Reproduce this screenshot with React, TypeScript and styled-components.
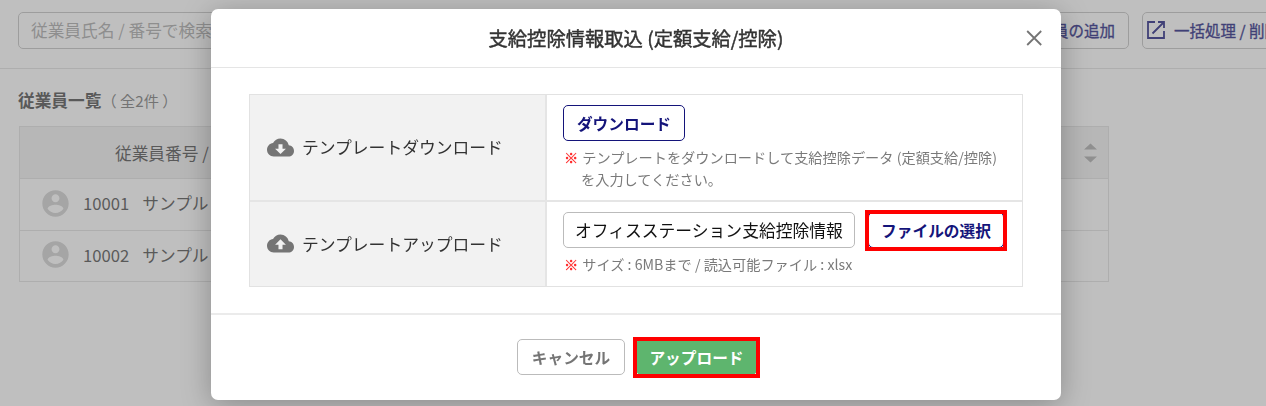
import React from "react";
import styled, { createGlobalStyle } from "styled-components";

const GlobalStyle = createGlobalStyle`
  * { box-sizing: border-box; }
  html, body { margin: 0; height: 100%; overflow: hidden; background: #fff; }
  body, button, input {
    font-family: "Noto Sans CJK JP", "Noto Sans", sans-serif;
    font-size: 16.7px;
    color: #333;
  }
`;

const Page = styled.div`
  width: 1266px;
  height: 406px;
  overflow: hidden;
`;

const Toolbar = styled.div`
  display: flex;
  height: 69px;
  padding: 12px 0 0 18px;
  border-bottom: 1px solid #dcdcdc;
`;

const SearchInput = styled.input`
  flex: none;
  width: 320px;
  height: 37px;
  padding: 0 12px 1px;
  border: 1px solid #bbb;
  border-radius: 5px;
  background: transparent;
  &::placeholder { color: #9c9c9c; opacity: 1; }
`;

const ToolbarActions = styled.div`
  display: flex;
  flex: none;
  gap: 13px;
  margin-left: 616px;
`;

const ToolbarButton = styled.button<{ $width: number; $icon?: boolean }>`
  display: flex;
  flex: none;
  align-items: center;
  justify-content: ${(p) => (p.$icon ? "flex-start" : "flex-end")};
  gap: 9px;
  width: ${(p) => p.$width}px;
  height: 37px;
  padding: ${(p) => (p.$icon ? "0 0 2px 4px" : "0 13px 2px")};
  border: 1px solid #bbb;
  border-radius: 5px;
  background: transparent;
  color: #00006e;
  font-size: 15.5px;
  -webkit-text-stroke: 0.35px currentColor;
  white-space: nowrap;
`;

const ListHeading = styled.div`
  display: flex;
  align-items: center;
  height: 57px;
  padding: 4px 0 0 18px;
`;

const ListTitle = styled.span`
  font-weight: 700;
`;

const ListCount = styled.span`
  font-size: 15.2px;
  color: #666;
  white-space: pre;
`;

const EmployeeTable = styled.div`
  width: 1090px;
  margin-left: 19px;
  border: 1px solid #dcdcdc;
`;

const EmployeeHead = styled.div`
  display: flex;
  align-items: center;
  justify-content: space-between;
  height: 51px;
  padding: 0 11px 0 95px;
  background: #efefef;
`;

const EmployeeRow = styled.div`
  display: flex;
  align-items: center;
  height: 51.5px;
  padding: 0 0 2px 20.5px;
  border-top: 1px solid #dcdcdc;
`;

const EmployeeNumber = styled.span`
  margin: 0 13px 0 13.5px;
`;

const Overlay = styled.div`
  position: fixed;
  inset: 0;
  display: flex;
  justify-content: center;
  align-items: flex-start;
  padding: 9px 0 0 6px;
  background: rgba(128, 128, 128, 0.5);
`;

const Dialog = styled.section`
  width: 850px;
  height: 391px;
  border-radius: 7px;
  background: #fff;
  box-shadow: 0 5px 30px rgba(0, 0, 0, 0.28);
`;

const DialogHeader = styled.header`
  display: grid;
  grid-template-columns: 53px 1fr 53px;
  align-items: center;
  height: 59px;
  border-bottom: 1px solid #e5e5e5;
`;

const DialogTitle = styled.h1`
  grid-column: 2;
  margin: 0;
  font-size: 19.3px;
  font-weight: 400;
  -webkit-text-stroke: 0.45px currentColor;
  text-align: center;
`;

const CloseButton = styled.button`
  display: flex;
  width: 24px;
  height: 24px;
  margin-left: 14px;
  padding: 0;
  border: 0;
  background: none;
`;

const DialogBody = styled.div`
  height: 245px;
  padding: 26px 38px 0;
`;

const FormTable = styled.div`
  width: 774px;
  border: 1px solid #e2e2e2;
`;

const FormRow = styled.div<{ $height: number }>`
  display: grid;
  grid-template-columns: 297px 1fr;
  height: ${(p) => p.$height}px;
  & + & { border-top: 2px solid #e5e5e5; }
`;

const FormLabel = styled.div`
  display: flex;
  align-items: center;
  gap: 8px;
  padding: 0 0 1px 17px;
  border-right: 2px solid #e5e5e5;
  background: #f2f2f2;
  font-size: 16.8px;
`;

const FormField = styled.div`
  padding: 10px 0 0 16px;
`;

const FieldLine = styled.div`
  display: flex;
  gap: 13px;
`;

const Note = styled.p`
  margin: 5px 0 0 1px;
  padding-left: 17px;
  text-indent: -17px;
  color: #7a7a7a;
  font-size: 14.2px;
  line-height: 22px;
  white-space: nowrap;
`;

const NoteMark = styled.span`
  margin-right: 4px;
  color: #ff2020;
  -webkit-text-stroke: 0.3px currentColor;
`;

const FileName = styled.div`
  width: 292px;
  height: 36px;
  padding-left: 11px;
  border: 1px solid #bbb;
  border-radius: 5px;
  color: #111;
  font-size: 16.8px;
  line-height: 34px;
  white-space: nowrap;
  overflow: hidden;
`;

type Tone = "navy" | "gray" | "green";
const tones: Record<Tone, string> = {
  navy: "border-color: #14147a; color: #14147a; background: #fff;",
  gray: "padding-top: 1px; border-color: #bbb; color: #757575; background: #fff;",
  green: "padding-top: 1px; border-color: #5eb56e; color: #fff; background: #5eb56e;",
};

const Button = styled.button<{ $tone: Tone; $width: number }>`
  display: block;
  flex: none;
  width: ${(p) => p.$width}px;
  height: 36px;
  padding: 0;
  border: 1px solid;
  border-radius: 5px;
  font-size: 15.7px;
  font-weight: 700;
  white-space: nowrap;
  ${(p) => tones[p.$tone]}
`;

const Highlight = styled.div`
  position: relative;
  align-self: flex-start;
  &::after {
    content: "";
    position: absolute;
    inset: -2px -3px -3px;
    border: 4px solid #f00;
    pointer-events: none;
  }
`;

const DialogFooter = styled.footer`
  display: flex;
  justify-content: center;
  align-items: flex-start;
  gap: 11px;
  height: 87px;
  padding: 24px 0 0 2px;
  border-top: 2px solid #ebebeb;
`;

const Icon = styled.svg`
  display: block;
  flex: none;
`;

const Avatar = () => (
  <Icon width="29" height="29" viewBox="1 1 22 22" fill="#cacaca">
    <path d="M12 2C6.48 2 2 6.48 2 12s4.48 10 10 10 10-4.48 10-10S17.52 2 12 2zm0 3c1.66 0 3 1.34 3 3s-1.34 3-3 3-3-1.34-3-3 1.34-3 3-3zm0 14.2c-2.5 0-4.71-1.28-6-3.22.03-1.99 4-3.08 6-3.08 1.99 0 5.97 1.09 6 3.08-1.29 1.94-3.5 3.22-6 3.22z" />
  </Icon>
);

const OpenIcon = () => (
  <Icon width="18" height="18" viewBox="0 0 18 18" fill="none" stroke="#00006e" strokeWidth="1.8">
    <path d="M8 1H1v16h16v-7M11 1h6v6M17 1L5.5 12.5" />
  </Icon>
);

const SortIcon = () => (
  <Icon width="13" height="20" viewBox="0 0 13 20" fill="#a0a0a0">
    <path d="M0 6.5L6.5 0.5 13 6.5zM0 13.5h13L6.5 19.5z" />
  </Icon>
);

const CloudIcon = ({ up }: { up?: boolean }) => (
  <Icon width="27" height="27" viewBox="0 0 24 24" fill="#757575">
    <path
      d={
        "M19.35 10.04C18.67 6.59 15.64 4 12 4 9.11 4 6.6 5.64 5.35 8.04 2.34 8.36 0 10.91 0 14c0 3.31 2.69 6 6 6h13c2.76 0 5-2.24 5-5 0-2.64-2.05-4.78-4.65-4.96z" +
        (up ? "M13.8 13v4h-3.6v-4H7.2l4.8-4.8 4.8 4.8z" : "M16.8 13l-4.8 4.8L7.2 13h3V9h3.6v4z")
      }
      fillRule="evenodd"
    />
  </Icon>
);

const employees = ["10001", "10002"];

export default function App() {
  return (
    <>
      <GlobalStyle />
      <Page>
        <Toolbar>
          <SearchInput placeholder="従業員氏名 / 番号で検索" />
          <ToolbarActions>
            <ToolbarButton $width={175}>従業員の追加</ToolbarButton>
            <ToolbarButton $width={180} $icon>
              <OpenIcon />
              一括処理 / 削除
            </ToolbarButton>
          </ToolbarActions>
        </Toolbar>
        <ListHeading>
          <ListTitle>従業員一覧</ListTitle>
          <ListCount>{"（ 全2件 ）"}</ListCount>
        </ListHeading>
        <EmployeeTable>
          <EmployeeHead>
            従業員番号 / 氏名
            <SortIcon />
          </EmployeeHead>
          {employees.map((number) => (
            <EmployeeRow key={number}>
              <Avatar />
              <EmployeeNumber>{number}</EmployeeNumber>
              サンプル
            </EmployeeRow>
          ))}
        </EmployeeTable>
      </Page>
      <Overlay>
        <Dialog>
          <DialogHeader>
            <DialogTitle>支給控除情報取込 (定額支給/控除)</DialogTitle>
            <CloseButton aria-label="閉じる">
              <Icon width="24" height="24" viewBox="0 0 24 24" stroke="#757575" strokeWidth="1.8">
                <path d="M5.2 5l14 14M19.2 5L5.2 19" />
              </Icon>
            </CloseButton>
          </DialogHeader>
          <DialogBody>
            <FormTable>
              <FormRow $height={105}>
                <FormLabel>
                  <CloudIcon />
                  テンプレートダウンロード
                </FormLabel>
                <FormField>
                  <Button $tone="navy" $width={122}>ダウンロード</Button>
                  <Note>
                    <NoteMark>※</NoteMark>
                    テンプレートをダウンロードして支給控除データ (定額支給/控除)
                    <br />
                    を入力してください。
                  </Note>
                </FormField>
              </FormRow>
              <FormRow $height={86}>
                <FormLabel>
                  <CloudIcon up />
                  テンプレートアップロード
                </FormLabel>
                <FormField>
                  <FieldLine>
                    <FileName>オフィスステーション支給控除情報</FileName>
                    <Highlight>
                      <Button $tone="navy" $width={136}>ファイルの選択</Button>
                    </Highlight>
                  </FieldLine>
                  <Note>
                    <NoteMark>※</NoteMark>
                    サイズ : 6MBまで / 読込可能ファイル : xlsx
                  </Note>
                </FormField>
              </FormRow>
            </FormTable>
          </DialogBody>
          <DialogFooter>
            <Button $tone="gray" $width={108}>キャンセル</Button>
            <Highlight>
              <Button $tone="green" $width={121}>アップロード</Button>
            </Highlight>
          </DialogFooter>
        </Dialog>
      </Overlay>
    </>
  );
}
